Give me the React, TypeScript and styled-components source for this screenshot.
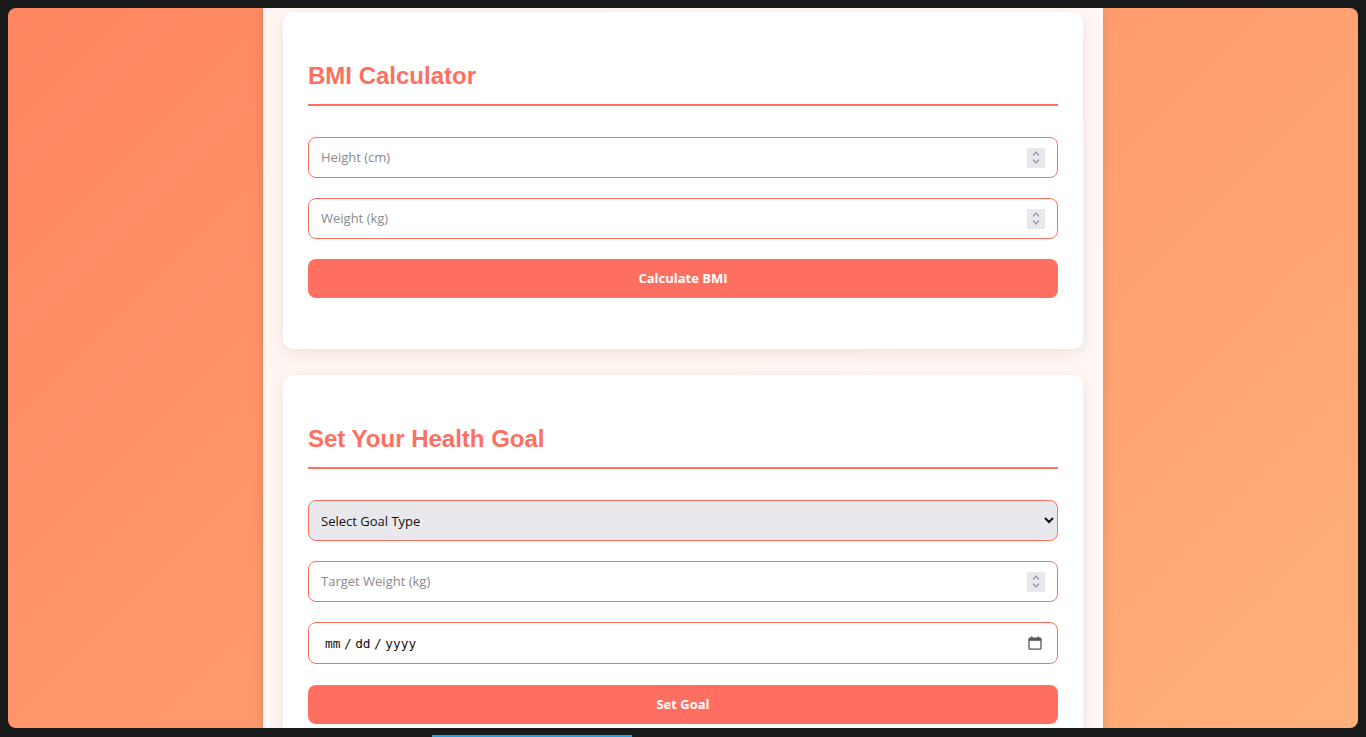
import React from "react";
import styled, { createGlobalStyle } from "styled-components";

const Global = createGlobalStyle`
  html, body { margin: 0; padding: 0; background: #181a1a; }
  * { box-sizing: border-box; }
`;

const Frame = styled.div`
  width: 1366px;
  height: 737px;
  padding: 8px 8px 0;
  display: flex;
  flex-direction: column;
  background: #181a1a;
  overflow: hidden;
`;

const Viewport = styled.div`
  height: 720px;
  border-radius: 8px;
  overflow: hidden;
  background: linear-gradient(135deg, #ff8660 0%, #ffb07a 100%);
`;

const BottomBar = styled.div`
  height: 9px;
  display: flex;
  align-items: flex-end;
  padding-left: 424px;
`;

const Indicator = styled.div`
  width: 200px;
  height: 2px;
  background: #1fa3e6;
`;

const Column = styled.main`
  width: 840px;
  margin: 0 auto;
  min-height: 100%;
  padding: 4px 20px 0;
  background: rgba(255, 255, 255, 0.92);
  box-shadow: 0 0 12px rgba(0, 0, 0, 0.12);
  display: flex;
  flex-direction: column;
  gap: 26px;
`;

const Card = styled.section`
  background: #fff;
  border-radius: 10px;
  box-shadow: 0 4px 16px rgba(120, 60, 40, 0.13);
  padding: 30px 25px 51px;
  display: flex;
  flex-direction: column;
`;

const Title = styled.h2`
  margin: 20px 0 31px;
  padding-bottom: 15px;
  border-bottom: 2px solid #ff6f61;
  font-family: "Liberation Sans", Arial, sans-serif;
  font-weight: 700;
  font-size: 24px;
  line-height: 27px;
  color: #ff6f61;
`;

const Fields = styled.div`
  display: flex;
  flex-direction: column;
  gap: 20px;
`;

const fieldBase = `
  display: block;
  width: 100%;
  height: 41px;
  padding: 0 12px;
  border: 1px solid #ff6f61;
  border-radius: 8px;
  font-family: "Open Sans", "Noto Sans", sans-serif;
  font-size: 13px;
  color: #222;
  outline: none;
  background: #fff;
  margin: 0;
`;

const FieldWrap = styled.div<{ $extra?: number }>`
  position: relative;
  margin-bottom: ${(p) => p.$extra ?? 0}px;
`;

const NumberInput = styled.input`
  ${fieldBase}
  padding-bottom: 1px;
  &::placeholder { color: #8a8a8a; }
  &::-webkit-inner-spin-button,
  &::-webkit-outer-spin-button { -webkit-appearance: none; margin: 0; }
  -moz-appearance: textfield;
`;

const DateInput = styled.input`
  ${fieldBase}
  height: 42px;
  font-family: "DejaVu Sans Mono", "Liberation Mono", monospace;
  font-size: 12.8px;
  color: #111;
  &::-webkit-datetime-edit { padding-left: 3px; }
  &::-webkit-datetime-edit-text { padding: 0 2.5px; }
  &::-webkit-calendar-picker-indicator { opacity: 0; cursor: pointer; }
`;

const Spinner = styled.span`
  position: absolute;
  right: 13px;
  top: 50%;
  transform: translateY(-50%);
  width: 18px;
  height: 20px;
  background: #e9e8ed;
  display: flex;
  flex-direction: column;
  align-items: center;
  justify-content: center;
  gap: 3px;
  pointer-events: none;
`;

const CalendarIcon = styled.span`
  position: absolute;
  right: 16px;
  top: 50%;
  transform: translateY(-50%);
  width: 14px;
  height: 14px;
  display: flex;
  pointer-events: none;
`;

const Select = styled.select`
  ${fieldBase}
  background: #e9e8ed;
  color: #111;
  padding: 0 8px;
`;

const Button = styled.button`
  width: 100%;
  height: 39px;
  border: none;
  border-radius: 8px;
  background: #ff6f61;
  color: #fff;
  font-family: "Open Sans", "Noto Sans", sans-serif;
  font-weight: 700;
  font-size: 13px;
  padding: 0;
  line-height: 1;
  cursor: pointer;
`;

function Chevron({ up }: { up?: boolean }) {
  return (
    <svg width="8" height="5" viewBox="0 0 8 5">
      <path
        d={up ? "M1 4.3 L4 1.2 L7 4.3" : "M1 0.7 L4 3.8 L7 0.7"}
        fill="none"
        stroke="#8c8b96"
        strokeWidth="1.2"
      />
    </svg>
  );
}

function NumberField({ placeholder }: { placeholder: string }) {
  return (
    <FieldWrap>
      <NumberInput type="number" placeholder={placeholder} />
      <Spinner>
        <Chevron up />
        <Chevron />
      </Spinner>
    </FieldWrap>
  );
}

function DateField() {
  return (
    <FieldWrap $extra={1}>
      <DateInput type="date" />
      <CalendarIcon>
        <svg width="14" height="14" viewBox="0 0 14 14">
          <rect x="3" y="0.5" width="1.6" height="3" fill="#555" />
          <rect x="9.4" y="0.5" width="1.6" height="3" fill="#555" />
          <rect x="1" y="2.2" width="12" height="11" rx="1" fill="none" stroke="#555" strokeWidth="1.3" />
          <rect x="1" y="2.2" width="12" height="2.6" fill="#555" />
        </svg>
      </CalendarIcon>
    </FieldWrap>
  );
}

export default function App() {
  return (
    <>
      <Global />
      <Frame>
        <Viewport>
          <Column>
            <Card>
              <Title>BMI Calculator</Title>
              <Fields>
                <NumberField placeholder="Height (cm)" />
                <NumberField placeholder="Weight (kg)" />
                <Button>Calculate BMI</Button>
              </Fields>
            </Card>
            <Card>
              <Title>Set Your Health Goal</Title>
              <Fields>
                <Select defaultValue="">
                  <option value="">Select Goal Type</option>
                  <option value="lose">Lose Weight</option>
                  <option value="gain">Gain Weight</option>
                  <option value="maintain">Maintain Weight</option>
                </Select>
                <NumberField placeholder="Target Weight (kg)" />
                <DateField />
                <Button>Set Goal</Button>
              </Fields>
            </Card>
          </Column>
        </Viewport>
        <BottomBar>
          <Indicator />
        </BottomBar>
      </Frame>
    </>
  );
}
